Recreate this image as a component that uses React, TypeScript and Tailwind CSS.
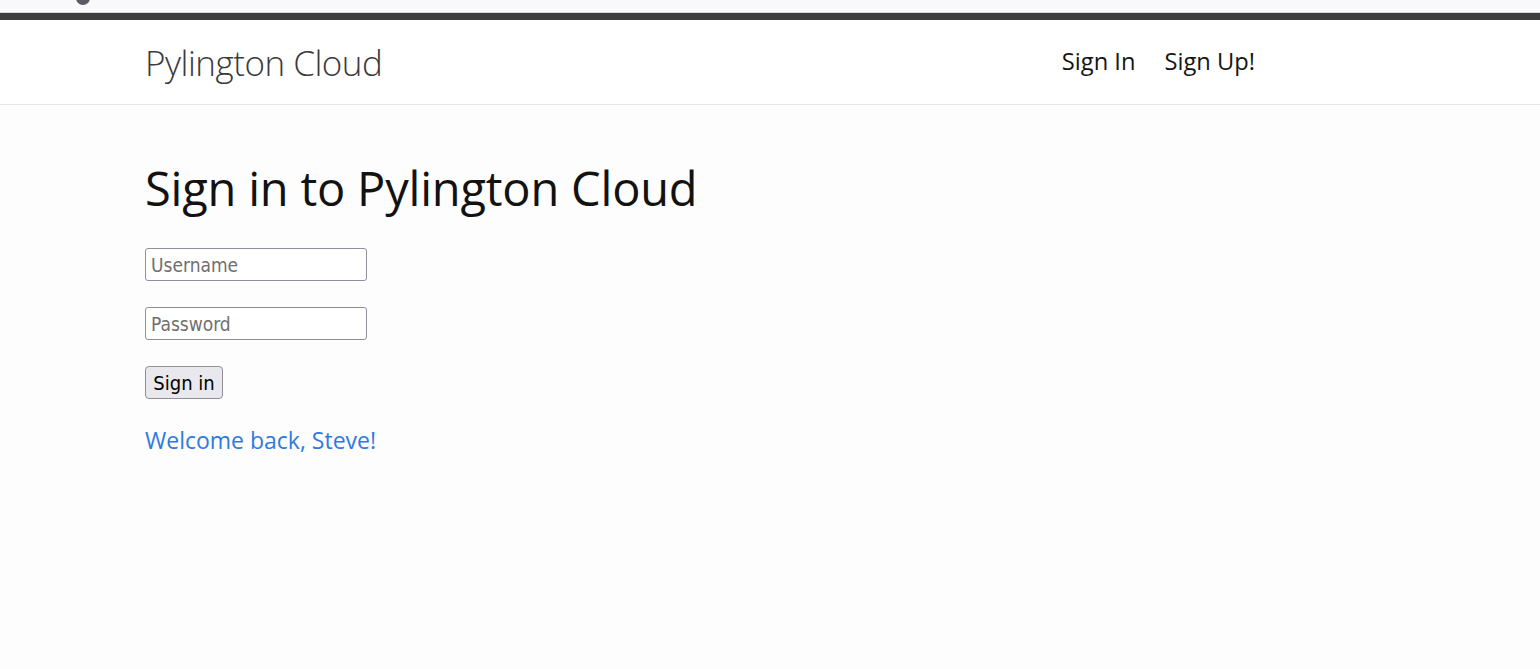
import React from 'react';

const segoe = { fontFamily: '"Open Sans", "Noto Sans", sans-serif' };

function App() {
    return (
        <div className="min-h-screen bg-[#fdfdfd] flex flex-col" style={segoe}>
            {/* browser chrome strip */}
            <div className="h-[13px] bg-[#f9f9fb] border-b border-[#d6d6d8] relative overflow-hidden">
                <div className="absolute left-[76px] -top-[9px] w-[14px] h-[14px] rounded-full bg-[#5b5b66]" />
            </div>
            <div className="h-[7px] bg-[#3d3d3d]" />

            <nav className="h-[85px] bg-white border-b border-[#e6e6e6] flex items-center pl-[145px] pr-[285px]">
                <a className="text-[35px] font-light text-[#3a3a3a] tracking-[-0.5px] leading-none">Pylington Cloud</a>
                <div className="ml-auto flex items-center gap-[29px] text-[23.7px] text-[#151515]">
                    <a>Sign In</a>
                    <a>Sign Up!</a>
                </div>
            </nav>

            <main className="pl-[145px] pt-[48px]">
                <h1 className="text-[47px] leading-[70px] text-[#121212] tracking-[-0.2px]">Sign in to Pylington Cloud</h1>
                <form className="mt-[25px] flex flex-col items-start gap-[26px]" style={{ fontFamily: '"DejaVu Sans Condensed", "DejaVu Sans", sans-serif' }}>
                    <input
                        placeholder="Username"
                        className="w-[222px] h-[33px] px-[5px] text-[19px] border border-[#8f8f9d] rounded-[3px] bg-white placeholder:text-[#6f6f6f] outline-none"
                    />
                    <input
                        placeholder="Password"
                        type="password"
                        className="w-[222px] h-[33px] px-[5px] text-[19px] border border-[#8f8f9d] rounded-[3px] bg-white placeholder:text-[#6f6f6f] outline-none"
                    />
                    <button
                        type="button"
                        className="h-[33px] w-[78px] text-[20px] text-black bg-[#e9e9ed] border border-[#8f8f9d] rounded-[4px]"
                    >
                        Sign in
                    </button>
                </form>
                <p className="mt-[24px] text-[23px] text-[#2f7ae0]">Welcome back, Steve!</p>
            </main>
        </div>
    );
}

export default App;
